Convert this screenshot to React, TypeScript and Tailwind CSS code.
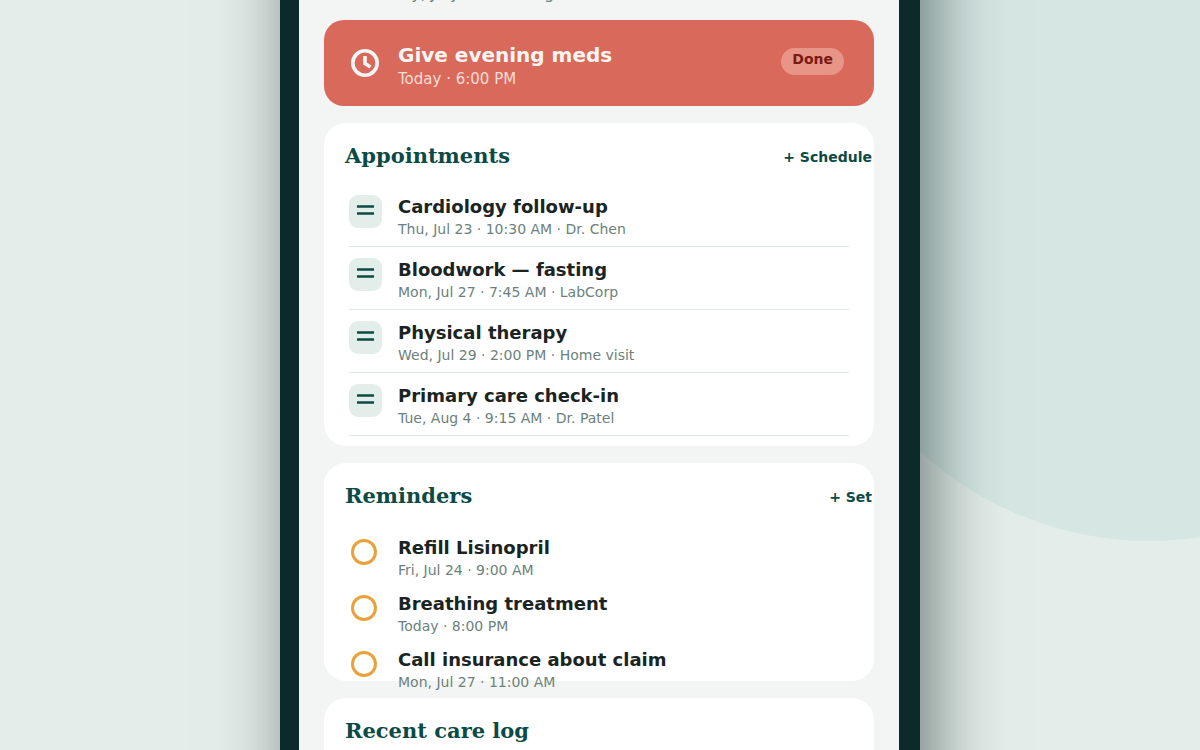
import React from "react";

type Appointment = { title: string; when: string };
type Reminder = { id: string; title: string; when: string };

const appointments: Appointment[] = [
  { title: "Cardiology follow-up", when: "Thu, Jul 23 · 10:30 AM · Dr. Chen" },
  { title: "Bloodwork — fasting", when: "Mon, Jul 27 · 7:45 AM · LabCorp" },
  { title: "Physical therapy", when: "Wed, Jul 29 · 2:00 PM · Home visit" },
  { title: "Primary care check-in", when: "Tue, Aug 4 · 9:15 AM · Dr. Patel" },
];

const reminders: Reminder[] = [
  { id: "refill", title: "Refill Lisinopril", when: "Fri, Jul 24 · 9:00 AM" },
  { id: "breathing", title: "Breathing treatment", when: "Today · 8:00 PM" },
  { id: "insurance", title: "Call insurance about claim", when: "Mon, Jul 27 · 11:00 AM" },
];

function SectionHeader({ title, action }: { title: string; action?: string }) {
  return (
    <header className="flex items-end justify-between pt-[19px] pr-0.5 pb-3.5 pl-[21px]">
      <h2 className="font-['DejaVu_Serif',serif] text-[21px] leading-7 font-bold text-[#0b4a45]">{title}</h2>
      {action && (
        <button type="button" className="text-sm leading-[26px] font-bold text-[#0b4a45]">
          {action}
        </button>
      )}
    </header>
  );
}

function ClockIcon() {
  return (
    <svg viewBox="0 0 28 28" className="size-7 shrink-0" fill="none" stroke="#f4f6f5" strokeWidth="3.6" aria-hidden="true">
      <circle cx="14" cy="14" r="12.2" />
      <path d="M14 7v7.5l5.5 3.5" />
    </svg>
  );
}

function EntryIcon() {
  return (
    <svg viewBox="0 0 17 10" className="h-2.5 w-[17px]" stroke="#0b4a45" strokeWidth="2.6" aria-hidden="true">
      <path d="M0 1.5h17M0 8.5h17" />
    </svg>
  );
}

export default function App() {
  return (
    <div className="relative flex h-screen justify-center overflow-hidden bg-[#e3ede9] font-['DejaVu_Sans',sans-serif]">
      <div className="absolute -top-[141px] -right-[291px] size-[682px] rounded-full bg-[#d6e7e3]" />
      <main className="relative -mt-[118px] -mb-[100px] flex w-full max-w-[640px] flex-col gap-[17px] border-r-[21px] border-l-[19px] border-[#0c2a29] bg-[#f3f5f4] px-[25px] pt-[100px] shadow-[12px_0_68px_rgba(12,32,30,0.56)]">
        <p className="h-[21px] shrink-0 pl-1 text-base leading-[23px] text-[#6b827b]">Wednesday, July 22 evening</p>

        <section className="flex h-[86px] shrink-0 items-start rounded-[20px] bg-[#d96a5b] pr-[30px] pl-[27px]">
          <div className="flex grow gap-[19px] pt-[23px]">
            <div className="pt-1.5">
              <ClockIcon />
            </div>
            <div>
              <h2 className="text-xl leading-6 font-bold text-[#f8f5f3]">Give evening meds</h2>
              <p className="text-[15px] leading-6 text-[#fadcd6]">Today · 6:00 PM</p>
            </div>
          </div>
          <button type="button" className="mt-7 rounded-full bg-[#e89587] px-[11px] pt-px pb-1.5 text-sm leading-5 font-bold text-[#7b1912]">
            Done
          </button>
        </section>

        <section className="shrink-0 rounded-[22px] bg-white pb-2.5">
          <SectionHeader title="Appointments" action="+ Schedule" />
          <ul className="px-[25px]">
            {appointments.map((item) => (
              <li key={item.title} className="flex gap-4 border-b border-[#dfe7e4] pt-[11px] pb-[7px]">
                <span className="flex size-[33px] shrink-0 justify-center rounded-[9px] bg-[#e3edea] pt-2.5">
                  <EntryIcon />
                </span>
                <div>
                  <h3 className="text-lg leading-6 font-bold text-[#1a2422]">{item.title}</h3>
                  <p className="text-sm leading-5 text-[#6b827b]">{item.when}</p>
                </div>
              </li>
            ))}
          </ul>
        </section>

        <section className="h-[218px] shrink-0 rounded-[22px] bg-white">
          <SectionHeader title="Reminders" action="+ Set" />
          <ul className="px-[27px]">
            {reminders.map((item) => (
              <li key={item.id} className="flex gap-[21px] pt-3">
                <input
                  id={item.id}
                  type="checkbox"
                  className="mt-[3px] size-[26px] shrink-0 appearance-none rounded-full border-[3px] border-[#e9a23b] checked:bg-[#e9a23b]"
                />
                <label htmlFor={item.id} className="block">
                  <span className="block text-lg leading-6 font-bold text-[#1a2422]">{item.title}</span>
                  <span className="block text-sm leading-5 text-[#6b827b]">{item.when}</span>
                </label>
              </li>
            ))}
          </ul>
        </section>

        <section className="shrink-0 grow rounded-t-[22px] bg-white">
          <SectionHeader title="Recent care log" />
        </section>
      </main>
    </div>
  );
}
